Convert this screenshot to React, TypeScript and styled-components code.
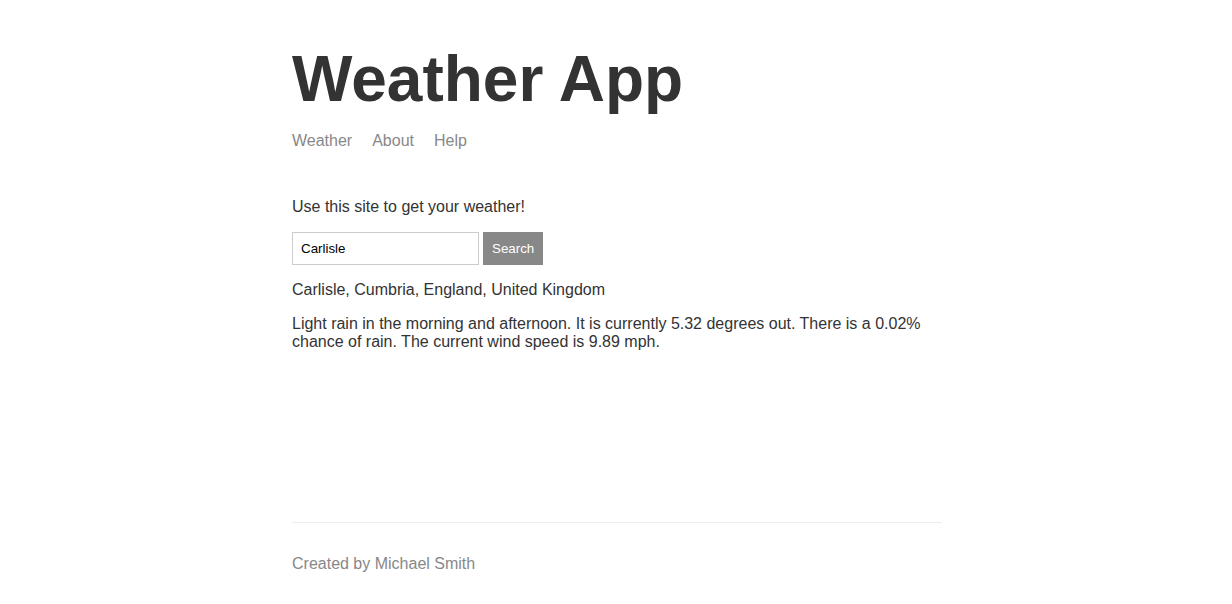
import styled, { createGlobalStyle } from "styled-components";
import { useState } from "react";

const GlobalStyle = createGlobalStyle`
  html, body {
    margin: 0;
    padding: 0;
    background: #ffffff;
  }
`;

const Page = styled.div`
  color: #333333;
  font-family: "Liberation Sans", Arial, sans-serif;
  font-size: 16px;
  max-width: 650px;
  margin: 0 auto;
  padding: 0 15px 0 17px;
  display: flex;
  flex-direction: column;
  min-height: 100vh;
`;

const Header = styled.header`
  margin-bottom: 48px;
`;

const Title = styled.h1`
  font-size: 64px;
  margin: 42px 0 16px 0;
`;

const Nav = styled.nav`
  display: flex;
`;

const NavLink = styled.a`
  color: #888888;
  margin-right: 20px;
  text-decoration: none;
`;

const Main = styled.main`
  flex-grow: 1;
`;

const Text = styled.p<{ $top?: number }>`
  margin: ${({ $top }) => ($top ?? 16)}px 0 16px 0;
`;

const SearchForm = styled.form`
  display: flex;
  gap: 4px;
`;

const Input = styled.input`
  width: 187px;
  box-sizing: border-box;
  border: 1px solid #cccccc;
  padding: 8px;
  font-family: "Liberation Sans", Arial, sans-serif;
  font-size: 13.33px;
  color: #000000;
  outline: none;
`;

const Button = styled.button`
  cursor: pointer;
  border: 1px solid #888888;
  background: #888888;
  color: #ffffff;
  padding: 8px;
  font-family: "Liberation Sans", Arial, sans-serif;
  font-size: 13.33px;
`;

const Footer = styled.footer`
  color: #888888;
  border-top: 1px solid #eeeeee;
  margin-top: 16px;
  padding: 16px 0 15px 0;

  p {
    margin: 16px 0;
  }
`;

const App = () => {
  const [city, setCity] = useState("Carlisle");

  return (
    <>
      <GlobalStyle />
      <Page>
        <Header>
          <Title>Weather App</Title>
          <Nav>
            <NavLink href="#">Weather</NavLink>
            <NavLink href="#">About</NavLink>
            <NavLink href="#">Help</NavLink>
          </Nav>
        </Header>
        <Main>
          <Text $top={0}>Use this site to get your weather!</Text>
          <SearchForm onSubmit={(e) => e.preventDefault()}>
            <Input value={city} onChange={(e) => setCity(e.target.value)} />
            <Button>Search</Button>
          </SearchForm>
          <Text>Carlisle, Cumbria, England, United Kingdom</Text>
          <Text>
            Light rain in the morning and afternoon. It is currently 5.32
            degrees out. There is a 0.02% chance of rain. The current wind
            speed is 9.89 mph.
          </Text>
        </Main>
        <Footer>
          <p>Created by Michael Smith</p>
        </Footer>
      </Page>
    </>
  );
};

export default App;
